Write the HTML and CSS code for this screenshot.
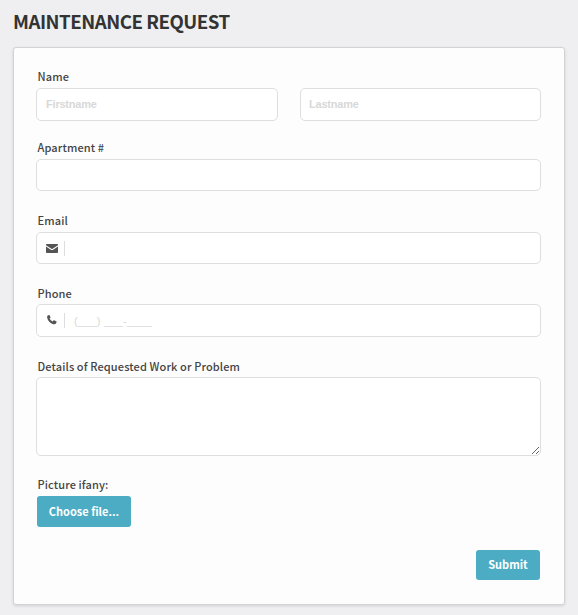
FILE: index.html
```html
<!DOCTYPE html>
<html lang="en">
  <head>
    <meta charset="utf-8">
    <title>Maintenance Request</title>
    <link rel="stylesheet" href="styles.css">
  </head>

  <body>
    <h1 class="title">MAINTENANCE REQUEST</h1>

    <form class="card">
      <div class="field field-name">
        <label for="firstname">Name</label>
        <div class="row">
          <input type="text" class="input" id="firstname" placeholder="Firstname">
          <input type="text" class="input" id="lastname" placeholder="Lastname">
        </div>
      </div>

      <div class="field field-apartment">
        <label for="apartment">Apartment #</label>
        <input type="text" class="input" id="apartment">
      </div>

      <div class="field">
        <label for="email">Email</label>
        <div class="input input-icon">
          <svg class="icon" width="12" height="9" viewBox="0 0 12 10" preserveAspectRatio="none">
            <path d="M0.8 0h10.4q.8 0 .8.8v.6L6.6 5.3q-.6.4-1.2 0L0 1.4V.8Q0 0 .8 0z" />
            <path d="M0 2.9l4.8 3.4q1.2.8 2.4 0L12 2.9v6.2q0 .9-.9.9H.9Q0 10 0 9.1z" />
          </svg>
          <input type="text" id="email">
        </div>
      </div>

      <div class="field field-phone">
        <label for="phone">Phone</label>
        <div class="input input-icon">
          <svg class="icon" width="12" height="10" viewBox="0 0 12 10">
            <path d="M1.7.6L3 0q.4-.1.6.3l.9 1.9q.1.4-.2.7l-.8.7q1.1 2 3.2 2.8l.7-.9q.3-.4.7-.2l2.1.9q.5.2.4.6-.2 1.4-1 2-.9.8-2.3.4Q2.300 7.700 1.100 2.500 1 1.200 1.700.6z" />
          </svg>
          <input type="text" id="phone" placeholder="(___) ___-____">
        </div>
      </div>

      <div class="field field-details">
        <label for="details">Details of Requested Work or Problem</label>
        <textarea class="input" id="details"></textarea>
      </div>

      <div class="field field-picture">
        <label>Picture ifany:</label>
        <button type="button" class="btn btn-file">Choose file...</button>
      </div>

      <div class="actions">
        <button type="submit" class="btn btn-submit">Submit</button>
      </div>
    </form>
  </body>
</html>
```
FILE: styles.css
```css
* {
  box-sizing: border-box;
}

body {
  margin: 0;
  padding: 6px 13px 10px;
  background: #efeff1;
  font-family: "Noto Sans CJK SC", "Noto Sans", sans-serif;
  color: #444;
}

.title {
  margin: 0 0 11px;
  font-size: 18.7px;
  line-height: 30px;
  font-weight: bold;
  letter-spacing: -0.5px;
  color: #333;
  white-space: nowrap;
}

.card {
  width: 552px;
  height: 558px;
  padding: 18px 23px 0 22px;
  background: #fdfdfd;
  border: 1px solid #d3d3d6;
  border-radius: 3px;
  box-shadow: 0 1px 3px rgba(0, 0, 0, 0.12);
}

.field {
  display: flex;
  flex-direction: column;
  margin-bottom: 18px;
}

.field-name {
  margin-bottom: 16px;
}

.field-apartment {
  margin-bottom: 19px;
}

.field label {
  height: 22px;
  padding-left: 1.5px;
  font-size: 11px;
  line-height: 20px;
  font-weight: 500;
  letter-spacing: 0.12px;
}

.field-phone label,
.field-details label {
  line-height: 22px;
}

.row {
  display: grid;
  grid-template-columns: 242px 241px;
  gap: 22px;
}

.input {
  width: 100%;
  height: 32px;
  padding: 0 9px;
  background: #fff;
  border: 1px solid #dedede;
  border-radius: 5px;
  font: bold 11px "Liberation Sans", sans-serif;
  color: #555;
  outline: none;
}

.row .input {
  padding-bottom: 2px;
  letter-spacing: -0.2px;
}

.row .input:last-child {
  padding-left: 8px;
}

.row .input,
.field-phone .input {
  height: 33px;
}

.input::placeholder,
.input-icon input::placeholder {
  color: #d8d8d8;
  opacity: 1;
}

.input-icon {
  display: flex;
  align-items: center;
}

.icon {
  flex: none;
  fill: #555;
}

.field-phone .icon {
  margin-top: -2px;
}

.input-icon input {
  flex: 1;
  height: 15px;
  margin-left: 6px;
  padding: 0 0 0 9px;
  border: 0;
  border-left: 1px solid #dcdcdc;
  background: none;
  font: 11px "Liberation Sans", sans-serif;
  letter-spacing: 0.2px;
  outline: none;
}

textarea.input {
  display: block;
  height: 79px;
  padding: 8px 9px;
  resize: vertical;
}

.btn {
  padding: 0 0 2px;
  border: 0;
  border-radius: 3px;
  background: #4bacc3;
  font: bold 11px "Noto Sans CJK SC", "Noto Sans", sans-serif;
  color: #fff;
}

.btn-file {
  width: 94px;
  height: 31px;
  margin-left: 1px;
}

.field-picture {
  margin-bottom: 23px;
}

.actions {
  display: flex;
  justify-content: flex-end;
  padding-right: 1px;
}

.btn-submit {
  width: 64px;
  height: 30px;
}
```
